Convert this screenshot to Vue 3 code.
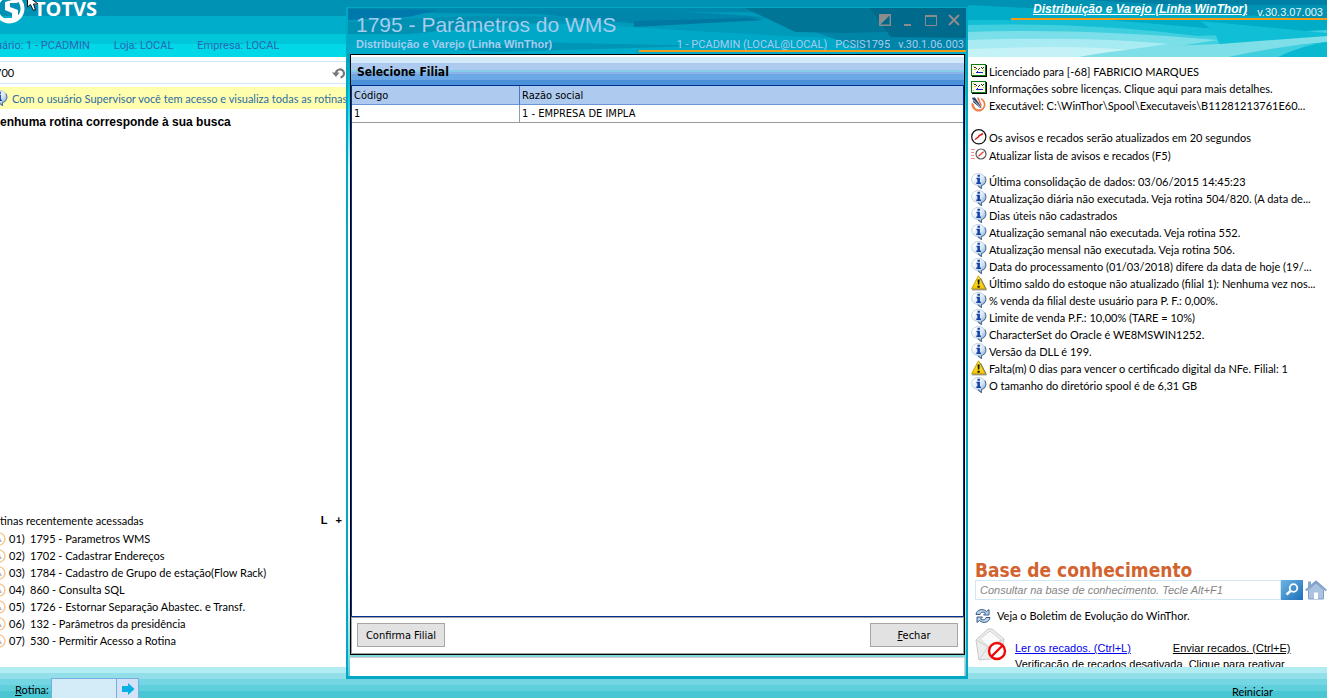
<script setup>
import { ref } from 'vue'

const search = ref('700')
const question = ref('')
const routine = ref('')

const session = ['uário: 1 - PCADMIN', 'Loja: LOCAL', 'Empresa: LOCAL']

const recent = [
  ['01)', '1795 - Parametros WMS'],
  ['02)', '1702 - Cadastrar Endereços'],
  ['03)', '1784 - Cadastro de Grupo de estação(Flow Rack)'],
  ['04)', '860 - Consulta SQL'],
  ['05)', '1726 - Estornar Separação Abastec. e Transf.'],
  ['06)', '132 - Parâmetros da presidência'],
  ['07)', '530 - Permitir Acesso a Rotina'],
]

const groups = [
  [
    { icon: 'license', text: 'Licenciado para [-68] FABRICIO MARQUES' },
    { icon: 'license', text: 'Informações sobre licenças. Clique aqui para mais detalhes.' },
    { icon: 'exe', text: 'Executável: C:\\WinThor\\Spool\\Executaveis\\B11281213761E60...' },
  ],
  [
    { icon: 'clock', text: 'Os avisos e recados serão atualizados em 20 segundos' },
    { icon: 'reload', text: 'Atualizar lista de avisos e recados (F5)' },
  ],
  [
    { icon: 'info', text: 'Última consolidação de dados: 03/06/2015 14:45:23' },
    { icon: 'info', text: 'Atualização diária não executada. Veja rotina 504/820. (A data de...' },
    { icon: 'info', text: 'Dias úteis não cadastrados' },
    { icon: 'info', text: 'Atualização semanal não executada. Veja rotina 552.' },
    { icon: 'info', text: 'Atualização mensal não executada. Veja rotina 506.' },
    { icon: 'info', text: 'Data do processamento (01/03/2018) difere da data de hoje (19/...' },
    { icon: 'warn', text: 'Último saldo do estoque não atualizado (filial 1): Nenhuma vez nos...' },
    { icon: 'info', text: '% venda da filial deste usuário para P. F.: 0,00%.' },
    { icon: 'info', text: 'Limite de venda P.F.: 10,00% (TARE = 10%)' },
    { icon: 'info', text: 'CharacterSet do Oracle é WE8MSWIN1252.' },
    { icon: 'info', text: 'Versão da DLL é 199.' },
    { icon: 'warn', text: 'Falta(m) 0 dias para vencer o certificado digital da NFe. Filial: 1' },
    { icon: 'info', text: 'O tamanho do diretório spool é de 6,31 GB' },
  ],
]
</script>

<template>
  <div class="app">
    <svg class="defs" width="0" height="0" aria-hidden="true">
      <defs>
        <linearGradient id="bubble" x1="0" y1="0" x2="1" y2="1">
          <stop offset="0.2" stop-color="#ffffff" />
          <stop offset="0.6" stop-color="#d2e4f6" />
          <stop offset="1" stop-color="#6c9ccc" />
        </linearGradient>
        <linearGradient id="amber" x1="0" y1="0" x2="0" y2="1">
          <stop offset="0" stop-color="#fff14a" />
          <stop offset="1" stop-color="#f5c400" />
        </linearGradient>
      </defs>
      <symbol id="i-info" viewBox="0 0 16 16">
        <path d="M7.500.5c3.800 0 6.800 2.600 6.800 6 0 2.900-2 5-4.600 5.700L9.500 15.300 6.200 12.400C3 12 .7 9.600.7 6.500.7 3.100 3.700.5 7.500.5z" fill="url(#bubble)" stroke="#b4c6dc" stroke-width=".8" />
        <path d="M13.800 3.500c1.300 2.100 1.500 4.400.2 6.500-.8 1.300-2 2.100-3.500 2.600v2.900L7 12.800" fill="none" stroke="#4f7098" stroke-width="1.100" />
        <path d="M6.500 1.800h2.400v2H6.500zM5.500 4.800h3.400v4.800h1V11H5.300V9.600h1.100V6.200h-.9z" fill="#1440a4" />
      </symbol>
      <symbol id="i-warn" viewBox="0 0 16 16">
        <path d="M7.500.8 14.500 13.700H.6z" fill="url(#amber)" stroke="#c9a20a" stroke-width="1" stroke-linejoin="round" />
        <path d="M1 14.800h14.400L9.500 3" fill="none" stroke="#77724c" stroke-width="1" />
        <path d="M6.500 4.500h2.200l-.4 5H6.900zM6.500 10.700h2.200v2H6.500z" fill="#151500" />
      </symbol>
      <symbol id="i-license" viewBox="0 0 16 16">
        <path d="M1 2h15v12H1z" fill="#000" />
        <path d="M0 1h15v12H0z" fill="#0a7a14" />
        <path d="M1 2h13v10H1z" fill="#fffef0" />
        <path d="M3 4h2v1H3zM5 5h1v1H5zM8 5h1v1H8zM10 4h1v1h-1zM11 5h1v1h-1zM7 6h1v1H7zM12 4h1v1h-1z" fill="#2c2c2c" />
        <path d="M5 9h7v1H5zM6 8h1v1H6z" fill="#2020b8" />
        <path d="M3 6h2v1H3zM2 3h1v1H2zM2 10h1v1H2zM12 7h1v1h-1z" fill="#c8c400" />
      </symbol>
      <symbol id="i-exe" viewBox="0 0 16 16">
        <path d="M9.500.8A7 7 0 1 1 .8 5.500L3 7.500A4.900 4.900 0 1 0 10.500 3.300z" fill="#ee8248" />
        <path d="M1 .8 4 .4l6.600 9.900-1.300.8L2.600 5.500z" fill="#26406c" />
        <path d="M6 .8 7.800.6l3 7.700-.9.900z" fill="#e6703a" />
        <path d="m2 2.500 7.500 7.800" stroke="#fff" stroke-width=".8" />
      </symbol>
      <symbol id="i-clock" viewBox="0 0 16 16">
        <circle cx="7.800" cy="7.800" r="7.100" fill="#fff" stroke="#111" stroke-width="1.200" />
        <path d="M4 10.500 7 8.300l1-1.500 4-2.300" fill="none" stroke="#e01818" stroke-width="1.500" />
      </symbol>
      <symbol id="i-reload" viewBox="0 0 16 16">
        <path d="M0 2.500h4M0 5.500h3M0 8.500h3M0 11.500h4" stroke="#f09090" stroke-width="1" />
        <circle cx="10" cy="7" r="5" fill="#fff" stroke="#555" stroke-width="1.200" />
        <path d="M7.500 9.200 12.500 4.800" stroke="#e03030" stroke-width="1.200" />
      </symbol>
    </svg>

    <header class="top">
      <div class="top-left">
        <svg class="logo" viewBox="0 0 25 25" aria-hidden="true">
          <circle cx="9.500" cy="8.500" r="13" fill="none" stroke="#fff" stroke-width="4" />
          <path d="M5 2 12 0h8l-3 3h-7v4l8 3v9l-6 2H0l6-3h6v-5L5 10z" fill="#fff" />
        </svg>
        <span class="brand">TOTVS</span>
        <svg class="cursor" viewBox="0 0 12 18" aria-hidden="true">
          <path d="M.5-4V7l3-2.500L6 10h2.500L6.500 4H11z" fill="#fff" stroke="#111" />
        </svg>
        <div class="session">
          <span v-for="s in session" :key="s">{{ s }}</span>
        </div>
      </div>
      <div class="top-right">
        <svg class="waves" viewBox="0 0 359 57" preserveAspectRatio="none" aria-hidden="true">
          <path d="M0 0h359v57H0z" fill="#00acc8" />
          <path d="M0 0h359v19L200 12 60 8 0 5z" fill="#0092b2" />
          <path d="M120 0h239v5L190 4z" fill="#007fa4" />
          <path d="M0 20 140 20l219 18v19H0z" fill="#14bfd6" />
          <path d="M0 25Q120 22 230 36L359 30v27H0z" fill="#40cfdf" />
          <path d="M0 32Q110 28 250 40L140 57H0z" fill="#7adfe9" />
          <path d="M0 40Q120 36 200 44L110 57H0z" fill="#a9ebf2" />
          <path d="M0 49Q120 44 180 52l20 5H0z" fill="#c4f2f6" />
          <path d="M232 21 359 33v10L252 50q0-16-20-29z" fill="#10bfd5" />
          <path d="M110 57Q170 46 252 44L359 36v6Q310 46 260 57z" fill="#7fdfe9" />
          <path d="M310 57Q335 45 359 42v15z" fill="#0ab8cf" />
        </svg>
        <div class="product">
          <a href="#">Distribuição e Varejo (Linha WinThor)</a>
          <span>v.30.3.07.003</span>
        </div>
      </div>
    </header>

    <main class="body">
      <section class="left">
        <div class="search">
          <input v-model="search" type="text" aria-label="Buscar rotina" />
          <button type="button" aria-label="Desfazer">
            <svg viewBox="0 0 14 12" aria-hidden="true">
              <path d="M4 7a4 4 0 1 1 4.500 3.400" fill="none" stroke="#777" stroke-width="2.200" />
              <path d="M0 5.500h7.500L4 10z" fill="#777" />
            </svg>
          </button>
        </div>
        <p class="hint">
          <svg class="ico"><use href="#i-info" /></svg>
          <span>Com o usuário Supervisor você tem acesso e visualiza todas as rotinas</span>
        </p>
        <p class="none">enhuma rotina corresponde à sua busca</p>
        <div class="recent">
          <div class="recent-head">
            <span>tinas recentemente acessadas</span>
            <span class="tools"><button type="button">L</button><button type="button">+</button></span>
          </div>
          <ul>
            <li v-for="[n, label] in recent" :key="n">
              <svg viewBox="0 0 8 14" aria-hidden="true">
                <path d="M-1 1A6 6 0 0 1-1 13" fill="none" stroke="#f8c896" stroke-width="1.500" />
                <path d="M0 6v4h2z" fill="#b8bcc8" />
              </svg>
              <span class="num">{{ n }}</span><span>{{ label }}</span>
            </li>
          </ul>
        </div>
      </section>

      <section class="right">
        <ul v-for="(g, i) in groups" :key="i" class="notices">
          <li v-for="n in g" :key="n.text">
            <svg class="ico"><use :href="'#i-' + n.icon" /></svg>
            <span>{{ n.text }}</span>
          </li>
        </ul>
        <div class="kb">
          <h2>Base de conhecimento</h2>
          <div class="kb-row">
            <input v-model="question" type="text" aria-label="Base de conhecimento" placeholder="Consultar na base de conhecimento. Tecle Alt+F1" />
            <button class="kb-find" type="button" aria-label="Pesquisar">
              <svg viewBox="0 0 22 20" aria-hidden="true">
                <circle cx="12.500" cy="8" r="3.800" fill="none" stroke="#fff" stroke-width="1.800" />
                <path d="m9.500 11-4 3.500" stroke="#fff" stroke-width="2.400" />
              </svg>
            </button>
            <button class="kb-home" type="button" aria-label="Início">
              <svg viewBox="0 0 22 20" aria-hidden="true">
                <path d="M3.500 10 11 3l7.500 7v9h-15z" fill="#a9c3e0" stroke="#7f9fc6" />
                <path d="M.8 10.500 11 1.500l10.200 9" fill="none" stroke="#7fa0c8" stroke-width="2" />
                <path d="M3 1.500h3v3.500L3 7.500z" fill="#89a8cd" />
                <path d="M9 12.500h4V19H9z" fill="#fff" />
              </svg>
            </button>
          </div>
          <p class="bulletin">
            <svg viewBox="0 0 16 16" aria-hidden="true">
              <path d="M1 6.500C1.500 1.500 8 0 11.500 3.500l2.500-2V7H8.500l2-2C8.500 3.500 5.500 4 5 6.500z" fill="#b8d0ea" stroke="#3c5c88" />
              <path d="M15 9.500C14.500 14.500 8 16 4.500 12.500L2 14.500V9h5.500l-2 2c2 1.500 5 1 5.500-1.500z" fill="#b8d0ea" stroke="#3c5c88" />
            </svg>
            Veja o Boletim de Evolução do WinThor.
          </p>
          <div class="mail">
            <svg viewBox="0 0 32 34" aria-hidden="true">
              <path d="M1 12 13 1h4l12 10-3 19-22 2z" fill="#ececec" stroke="#c9c9c9" />
              <path d="M5 11 15 3l11 9-11 8z" fill="#fafafa" stroke="#d4d4d4" />
              <path d="M1 12 15 20 29 11M4 32l9-13M26 30 17 19" fill="none" stroke="#cfcfcf" />
              <circle cx="22" cy="23" r="8" fill="#fff" stroke="#f00808" stroke-width="2.400" />
              <path d="M16.500 28.500 27.500 17.500" stroke="#f00808" stroke-width="2.400" />
            </svg>
            <div class="mail-text">
              <div class="links">
                <a class="blue" href="#">Ler os recados. (Ctrl+L)</a>
                <a href="#">Enviar recados. (Ctrl+E)</a>
              </div>
              <p>Verificação de recados desativada. Clique para reativar</p>
            </div>
          </div>
        </div>
      </section>
    </main>

    <footer class="bottom">
      <form class="go" @submit.prevent>
        <label for="routine"><u>R</u>otina:</label>
        <input id="routine" v-model="routine" type="text" />
        <button type="submit" aria-label="Abrir rotina">
          <svg viewBox="0 0 14 12" aria-hidden="true">
            <path d="M1 3h6V0l6.500 6L7 12V9H1z" fill="#08b0e4" />
          </svg>
        </button>
      </form>
      <button class="restart" type="button">Reiniciar</button>
    </footer>

    <div class="dialog" role="dialog" aria-labelledby="dlg-title">
      <div class="dlg-head">
        <svg class="waves" viewBox="0 0 616 46" preserveAspectRatio="none" aria-hidden="true">
          <path d="M0 0h616v46H0z" fill="#009abb" />
          <path d="M0 26Q120 8 300 20T616 34v12H0z" fill="#00a8c8" />
          <path d="M0 0h616v8L380 4 180 6 0 4z" fill="#0088ac" />
          <path d="M0 1 90 2 60 9 0 12z" fill="#0078ac" />
          <path d="M0 14 120 8l150 1-120 9-90 8H0z" fill="#0090b2" />
          <path d="M170 4Q320 0 420 10L290 16z" fill="#0086aa" />
          <path d="M285 13 400 10l15 2-130 7z" fill="#0078a0" />
          <path d="M60 46 180 34l180 4 70 8z" fill="#0094b6" />
          <path d="M390 0h226v46h-90l-60-22-40-12z" fill="#0085a8" />
          <path d="M396 0h220v22l-120 3-50-1z" fill="#007596" />
          <path d="M520 0h96v30l-75-1z" fill="#006a8c" />
          <path d="M0 36 150 44l200-6 266 6v2H0z" fill="#00acc9" />
        </svg>
        <div class="dlg-titles">
          <h1 id="dlg-title">1795 - Parâmetros do WMS</h1>
          <p>Distribuição e Varejo (Linha WinThor)</p>
        </div>
        <div class="dlg-meta">
          <div class="win">
            <button type="button" aria-label="Alternar"><svg viewBox="0 0 12 12"><path d="M.7.7h10.600v10.600H.7z" fill="none" stroke="#8c8c8c" stroke-width="1.400" /><path d="M0 0h12L0 12z" fill="#8c8c8c" /></svg></button>
            <button type="button" aria-label="Minimizar"><svg viewBox="0 0 12 12"><path d="M2 10h7v2H2z" fill="#8c8c8c" /></svg></button>
            <button type="button" aria-label="Maximizar"><svg viewBox="0 0 12 12"><path d="M.5 1.500h11v10H.5z" fill="none" stroke="#8c8c8c" /><path d="M0 1h12v2H0z" fill="#8c8c8c" /></svg></button>
            <button type="button" aria-label="Fechar janela"><svg viewBox="0 0 12 12"><path d="m1 1 10 10M11 1 1 11" stroke="#8c8c8c" stroke-width="2" /></svg></button>
          </div>
          <p class="who"><span>1 - PCADMIN (LOCAL@LOCAL)</span><span>PCSIS1795</span><span>v.30.1.06.003</span></p>
        </div>
      </div>
      <div class="panel">
        <h3>Selecione Filial</h3>
        <div class="grid">
          <table>
            <thead>
              <tr><th>Código</th><th>Razão social</th></tr>
            </thead>
            <tbody>
              <tr><td>1</td><td>1 - EMPRESA DE IMPLA</td></tr>
            </tbody>
          </table>
        </div>
        <div class="actions">
          <button type="button">Confirma Filial</button>
          <button type="button"><span><u>F</u>echar</span></button>
        </div>
      </div>
      <div class="status"></div>
    </div>
  </div>
</template>

<style>
html, body, #app { height: 100%; }
body { margin: 0; background: #fff; }
</style>

<style scoped>
* { box-sizing: border-box; }
.app {
  position: relative;
  display: flex;
  flex-direction: column;
  height: 100%;
  overflow: hidden;
  font-family: Lato, "Liberation Sans", sans-serif;
  font-size: 11px;
  line-height: 17px;
  color: #000;
  background: #fff;
}
.defs { position: absolute; }
h1, h2, h3, p, ul { margin: 0; padding: 0; }
ul { list-style: none; }
button { padding: 0; border: 0; background: none; font: inherit; color: inherit; }
input { font: inherit; min-width: 0; }
svg { display: block; flex: none; }
.ico { width: 16px; height: 16px; }

.top {
  display: flex;
  justify-content: space-between;
  height: 57px;
  flex: none;
  background: linear-gradient(#0092b4 16px, #00aecb 16px 34px, #00c6da 34px 44px, #00d8e7 44px);
}
.top-left { position: relative; width: 346px; }
.logo { position: absolute; left: 0; top: 0; width: 25px; height: 25px; }
.brand {
  position: absolute;
  left: 34px;
  top: 0;
  font: bold 20px/18px "Open Sans", sans-serif;
  color: #fff;
}
.cursor { position: absolute; left: 27px; top: 0; width: 12px; height: 18px; }
.session {
  display: flex;
  gap: 24px;
  margin-left: -4px;
  padding-top: 37px;
  font-family: Roboto, "Liberation Sans", sans-serif;
  color: #2a66b4;
}
.top-right { position: relative; width: 359px; }
.waves { position: absolute; inset: 0; width: 100%; height: 100%; }
.product {
  position: relative;
  display: flex;
  justify-content: flex-end;
  gap: 10px;
  height: 20px;
  margin-left: 43px;
  padding-right: 4px;
  border-bottom: 2px solid #f09a18;
  font-family: "Liberation Sans", Arial, sans-serif;
  line-height: 18px;
  color: #e4f6fa;
}
.product a { font-size: 12px; font-weight: bold; font-style: italic; color: #fff; }
.product span { padding-top: 3px; }

.body {
  display: flex;
  justify-content: space-between;
  flex: 1;
  min-height: 0;
}
.left { display: flex; flex-direction: column; width: 346px; padding-top: 4px; }
.search {
  display: flex;
  align-items: center;
  height: 23px;
  border: solid #cfe6f4;
  border-width: 1px 0;
}
.search input { flex: 1; margin-left: -5px; padding: 0; border: 0; outline: 0; }
.search button { width: 14px; }
.search svg { width: 14px; height: 12px; }
.hint {
  display: flex;
  align-items: center;
  gap: 4px;
  height: 22px;
  margin-top: 3px;
  background: #ffffae;
  color: #2f6ca4;
  white-space: nowrap;
}
.hint .ico { margin-left: -8px; }
.none { margin-top: 5px; font-family: "Liberation Sans", Arial, sans-serif; font-size: 12px; font-weight: bold; }
.recent { margin-top: auto; padding-bottom: 18px; }
.recent-head { display: flex; justify-content: space-between; margin-bottom: 1px; }
.tools {
  display: flex;
  gap: 8px;
  padding-right: 4px;
  font-family: "Liberation Sans", Arial, sans-serif;
  font-weight: bold;
}
.recent li { display: flex; align-items: center; }
.recent li svg { width: 8px; height: 14px; }
.num { width: 22px; padding-left: 1px; }

.right {
  display: flex;
  flex-direction: column;
  width: 359px;
  padding: 6px 0 0 3px;
  overflow: hidden;
}
.notices { margin-bottom: 8px; }
.notices:nth-of-type(1) { margin-bottom: 15px; }
.notices:nth-of-type(2) { line-height: 18px; }
.notices li { display: flex; align-items: flex-start; gap: 2px; white-space: nowrap; }
.kb { margin-top: auto; padding-left: 4px; height: 109px; }
h2 {
  font: bold 19px/24px "DejaVu Sans Condensed", "DejaVu Sans", sans-serif;
  color: #d2622e;
}
.kb-row { display: flex; height: 20px; margin-top: -2px; }
.kb-row input {
  flex: 1;
  padding: 0 4px;
  border: 1px solid #cfe8f4;
  font-family: "Liberation Sans", Arial, sans-serif;
  font-style: italic;
}
.kb-row input::placeholder { color: #858585; opacity: 1; }
.kb-find { width: 22px; background: linear-gradient(135deg, #6db4e4, #1c70b8); }
.kb-home { width: 24px; padding-left: 2px; }
.kb-row svg { width: 22px; height: 20px; }
.bulletin { display: flex; align-items: center; gap: 6px; margin-top: 7px; }
.bulletin svg { width: 16px; height: 16px; }
.mail { display: flex; gap: 8px; margin-top: 4px; }
.mail svg { width: 32px; height: 34px; }
.mail-text {
  padding-top: 12px;
  font-family: "Liberation Sans", Arial, sans-serif;
  line-height: 16px;
  white-space: nowrap;
}
.links { display: flex; gap: 42px; }
.links a { color: #000; }
.links a.blue { color: #0000f0; }

.bottom {
  display: flex;
  justify-content: space-between;
  align-items: flex-start;
  flex: none;
  height: 31px;
  overflow: hidden;
  background: linear-gradient(#b0ecf2 6px, #92dfea 6px 12px, #74d6e2 12px 18px, #5fcfdb 18px 24px, #48c6d4 24px);
}
.go { display: flex; padding: 11px 0 0 15px; }
.go label { width: 36px; line-height: 24px; }
.go input { width: 66px; height: 22px; border: 1px solid #78ace0; background: #d4ecf8; }
.go button { width: 22px; height: 22px; border: 1px solid #78ace0; border-left: 0; background: #d4e2f8; }
.go svg { width: 14px; height: 12px; margin: 0 auto; }
.restart { margin: 16px 54px 0 0; }

.dialog {
  position: absolute;
  left: 346px;
  right: 359px;
  top: 7px;
  bottom: 19px;
  display: flex;
  flex-direction: column;
  padding: 0 1px 0 2px;
  border: solid #00a8c6;
  border-width: 1px 2px 3px;
  font-family: "DejaVu Sans Condensed", "DejaVu Sans", sans-serif;
  background: linear-gradient(#0098b8 46px, #00d4e4 90px, #d8f6fa 160px, #fff 220px, #fff 560px, #8ce0ea 640px, #58ccd8);
}
.dlg-head {
  position: relative;
  display: flex;
  justify-content: space-between;
  height: 46px;
  flex: none;
  margin: 0 -1px 0 -2px;
  font-family: "Liberation Sans", Arial, sans-serif;
  color: #a6ccee;
}
.dlg-titles { position: relative; padding: 5px 0 0 8px; white-space: nowrap; }
h1 { font-size: 21px; line-height: 24px; font-weight: normal; }
.dlg-titles p { font-weight: bold; line-height: 14px; }
.dlg-meta { position: relative; width: 327px; padding: 6px 2px 0 0; border-bottom: 2px solid #f09a18; margin-bottom: 2px; }
.win { display: flex; justify-content: flex-end; gap: 11px; padding-right: 4px; }
.win svg { width: 12px; height: 12px; }
.who {
  display: flex;
  justify-content: flex-end;
  gap: 8px;
  margin-top: 10px;
  font-family: Roboto, "Liberation Sans", sans-serif;
  white-space: nowrap;
}
.panel {
  display: flex;
  flex-direction: column;
  flex: 1;
  min-height: 0;
  border: 1px solid #000;
  background: #fff;
}
h3 {
  height: 30px;
  flex: none;
  padding-left: 6px;
  font-size: 12px;
  line-height: 34px;
  background: linear-gradient(#fff 2px, #d4eaf8 2px 8px, #aecaee 8px 15px, #86cdea 15px 17px, #8cb4e8 17px 19px, #6ca8e6 19px 25px, #4c90da 25px);
}
.grid { flex: 1; border: 1px solid #003090; }
table { width: 100%; border-collapse: separate; border-spacing: 0; table-layout: fixed; }
th { padding: 2px 2px 0; height: 19px; line-height: 16px; text-align: left; font-weight: normal; background: #aecaee; border-bottom: 1px solid #6c94d8; }
th:first-child, td:first-child { width: 168px; border-right: 1px solid #8c9cb8; }
th:first-child { border-right-color: #4878c8; }
td { padding: 0 2px; height: 18px; line-height: 17px; border-bottom: 1px solid #9a9a9a; }
.actions {
  display: flex;
  justify-content: space-between;
  padding: 5px;
  height: 37px;
  flex: none;
  border: 1px solid #a0a0a0;
}
.actions button { width: 88px; height: 24px; border: 1px solid #a6a6a6; background: #e2e2e2; }
.status { height: 19px; flex: none; margin-top: 2px; border: 1px solid #d0d0cc; border-width: 1px 1px 0 0; background: #fff; }
</style>
